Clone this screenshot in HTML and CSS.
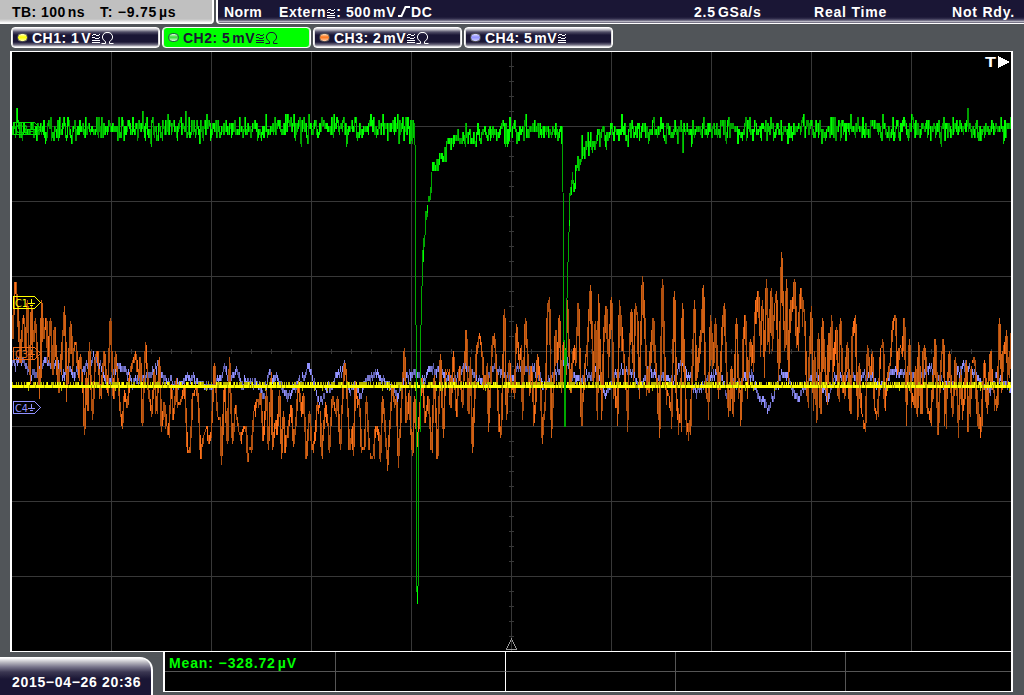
FILE: index.html
```html
<!DOCTYPE html>
<html lang="en">
<head>
<meta charset="utf-8">
<title>Oscilloscope</title>
<link rel="stylesheet" href="styles.css">
</head>
<body>
<svg class="defs" width="0" height="0">
  <symbol id="ac" viewBox="0 0 9 9"><path d="M1 .5h3M7 .5h1M0 1.500h1M4 1.500h3M0 3.500h1M1 3.500h2M3 4.500h4M7 3.500h1M0 6.500h8M0 8.500h8"/></symbol>
  <symbol id="ohm" viewBox="0 0 13 12"><path d="M.5 11.500H4.500V9.500L2.500 8L1.500 6V4L3 1.500L5 .5H8L10 1.500L11.500 4V6L10.500 8L8.500 9.500V11.500H12.500"/></symbol>
</svg>
<div class="scope">
  <header class="top">
    <div class="timebase"><span class="t-tb">TB: 100<i></i>ns</span><span class="t-off">T: −9.75<i></i>µs</span></div>
    <div class="status">
      <span class="t-norm">Norm</span>
      <span class="t-ext">Extern<svg class="ac"><use href="#ac"/></svg>: 500<i></i>mV<svg class="edge" viewBox="0 0 12 11"><path d="M0 10H3.500L7.500 1H12"/></svg>DC</span>
      <span class="t-rate">2.5<i></i>GSa/s</span>
      <span class="t-real">Real Time</span>
      <span class="t-rdy">Not Rdy.</span>
    </div>
  </header>
  <nav class="channels">
    <div class="ch c1"><b class="led"></b><span>CH1: 1<i></i>V</span><svg class="ac"><use href="#ac"/></svg><svg class="ohm"><use href="#ohm"/></svg></div>
    <div class="ch c2"><b class="led"></b><span>CH2: 5<i></i>mV</span><svg class="ac"><use href="#ac"/></svg><svg class="ohm"><use href="#ohm"/></svg></div>
    <div class="ch c3"><b class="led"></b><span>CH3: 2<i></i>mV</span><svg class="ac"><use href="#ac"/></svg><svg class="ohm"><use href="#ohm"/></svg></div>
    <div class="ch c4"><b class="led"></b><span>CH4: 5<i></i>mV</span><svg class="ac"><use href="#ac"/></svg></div>
  </nav>
  <main class="screen"><svg id="plot" viewBox="12 52 999 599" width="999" height="599"></svg></main>
  <footer class="bottom">
    <div class="clock">2015−04−26 20:36</div>
    <div class="measure">
      <div class="cell t-mean"><span>Mean: −328.72<i></i>µV</span></div><div class="cell white"></div><div class="cell"></div><div class="cell"></div><div class="cell last"></div>
      <div class="cell low"></div><div class="cell low white"></div><div class="cell low"></div><div class="cell low"></div><div class="cell low last"></div>
    </div>
  </footer>
</div>
<script src="scope.js"></script>
</body>
</html>
```
FILE: styles.css
```css
* { box-sizing: border-box; }
body { margin: 0; overflow: hidden; background: #515559; color: #fff; font: bold 14px/16px "Liberation Sans", Arial, sans-serif; }
.defs { position: absolute; }
.scope { width: 1024px; height: 695px; display: flex; flex-direction: column; }
i { display: inline-block; width: 2px; }
.top { display: flex; gap: 2px; height: 24px; }
.top span { white-space: pre; flex: none; }
.timebase { width: 214px; height: 24px; display: flex; padding: 4px 0 0 12px; color: #000; background: linear-gradient(#c0c0c0 19px, #ddd 21px, #fff 23px); border-right: 2px solid #fff; border-radius: 0 0 4px 0; }
.status { flex: 1; display: flex; padding: 4px 0 0 6px; border-left: 2px solid #fff; border-bottom: 1px solid #fff; border-radius: 0 0 0 4px; background: linear-gradient(#1a1635 17px, #353150 19px, #8a879a 21px, #e4e4ea 22px, #777487 22.5px, #fff 23px); }
.t-tb { width: 88px; letter-spacing: .45px; }
.t-off { letter-spacing: .75px; }
.t-norm { width: 55px; letter-spacing: .4px; }
.t-ext { width: 415px; letter-spacing: .6px; }
.t-rate { width: 120px; letter-spacing: .8px; }
.t-real { width: 138px; letter-spacing: .8px; }
.t-rdy { letter-spacing: .8px; }
svg { fill: none; stroke: currentColor; }
.ac { width: 9px; height: 9px; margin-top: 1px; shape-rendering: crispEdges; }
.t-ext .ac { margin-left: 1px; vertical-align: -1px; }
.ohm { width: 13px; height: 12px; margin-left: 0; }
.edge { width: 12px; height: 11px; stroke-width: 2; margin: 0 1px 0 2px; }
.channels { display: flex; gap: 2px; height: 27px; padding: 3px 0 0 11px; }
.ch { width: 149px; height: 21px; display: flex; align-items: center; padding: 0 0 0 5px; border: 1px solid #fff; border-radius: 4px; background: linear-gradient(#f4f4f6, #aaa8b4 2px, #514e67 4px, #1a1635 7px, #1a1635 14px, #777487 17px, #fff 19px); box-shadow: inset 1px 0 #ddd, inset -1px 0 #ddd; }
.ch span { white-space: pre; letter-spacing: .5px; margin-right: 1px; }
.c2 { background: #0f0; color: #1a1635; }
.led { width: 11px; height: 9px; border: 1px solid #555; border-radius: 5px; margin-right: 4px; }
.c1 .led { background: linear-gradient(#ffc, #ff0 45%, #ffa); }
.c2 .led { background: linear-gradient(#dfd, #3d3 45%, #dfd); border-color: #254; }
.c3 .led { background: linear-gradient(#fdb, #ff761b 45%, #fca); }
.c4 .led { background: linear-gradient(#ddf, #9191ff 45%, #ccf); }
.screen { margin-left: 10px; width: 1003px; height: 601px; background: #000; border: 1px solid #fff; border-width: 1px 2px; }
#plot { display: block; stroke: none; shape-rendering: crispEdges; }
.marker { font: 11px "DejaVu Sans", sans-serif; }
.bottom { height: 43px; display: flex; gap: 10px; }
.clock { width: 153px; height: 38px; margin-top: 5px; padding: 16px 0 0 12px; letter-spacing: .68px; white-space: pre; border: 2px solid #fff; border-width: 1px 2px 0 0; border-radius: 0 13px 0 0; background: linear-gradient(#fff, #c0bfc6 4px, #77748a 9px, #3b3752 14px, #1a1635 21px); }
.measure { width: 850px; height: 40px; display: grid; grid-template-columns: 171px 170px 170px 170px 1fr; grid-template-rows: 20px 1fr; background: #000; border: 2px solid #fff; border-width: 0 2px 1px; }
.cell { border: 0 solid #555; border-right-width: 1px; border-bottom-width: 1px; }
.cell.low { border-bottom: 0; }
.cell.white { border-right-color: #fff; }
.cell.last { border-right: 0; }
.t-mean { color: #0f0; padding: 3px 0 0 4px; white-space: pre; letter-spacing: .88px; }
```
FILE: scope.js
```js
const svg = document.getElementById('plot');
const NS = 'http://www.w3.org/2000/svg';
const add = (tag, attrs, text) => {
  const el = document.createElementNS(NS, tag);
  for (const k in attrs) el.setAttribute(k, attrs[k]);
  if (text) el.textContent = text;
  svg.appendChild(el);
};
let seed = 20150426;
const rnd = () => { seed = (seed * 1664525 + 1013904223) % 4294967296; return seed / 4294967296; };
const noise = () => rnd() + rnd() + rnd() - 1.5;

// Graticule: 10 x 8 divisions with five ticks per division
let grid = '';
for (let x = 111; x < 1011; x += 100) grid += `M${x} 52h1v599h-1z`;
for (let y = 126; y < 651; y += 75) grid += `M12 ${y}h999v1h-999z`;
for (let x = 31; x < 1011; x += 20) grid += `M${x} 349h1v5h-1z`;
for (let y = 66; y < 651; y += 15) grid += `M509 ${y}h5v1h-5z`;
add('path', { d: grid, fill: '#383838' });

const parse = s => s.trim().split(/\s+/).map(p => p.split(':').map(Number));
const at = (pts, x) => {
  let i = 1;
  while (i < pts.length - 1 && pts[i][0] < x) i++;
  const [a, b] = pts[i - 1], [c, d] = pts[i];
  return b + (d - b) * Math.max(0, Math.min(1, (x - a) / (c - a || 1)));
};
// Column segments in three intensities
const draw = (cols, shades) => {
  const d = ['', '', ''];
  cols.forEach(([x, a, b]) => {
    const h = Math.max(3, Math.round((b - a) / 3) * 3), y = Math.round(a / 3) * 3;
    const k = h > 24 ? (rnd() < .5 ? 0 : 1) : Math.floor(rnd() * 3);
    d[k] += `M${x} ${y}h1v${h}h-1z`;
  });
  d.forEach((p, i) => add('path', { d: p, fill: shades[i] }));
};

const violet = parse(`12:364 17:362 22:360 26:365 31:375 35:376 40:370 45:360 51:365 56:365 60:370 63:375 68:368 73:374 77:372 82:368 87:365 92:358 97:362 102:372 108:385 113:375 118:365 123:366 128:374 132:384 138:378 145:376 150:374 153:370 158:366 162:377 168:381 174:385 180:384 185:378 192:377 197:385 203:385 211:388 217:382 222:374 224:366 227:378 231:378 234:372 237:370 241:385 243:388 245:378 250:383 255:381 259:386 263:395 266:385 269:372 272:380 277:377 280:384 284:392 289:398 293:388 298:383 304:376 309:366 312:376 315:388 319:405 323:397 326:387 331:390 335:378 340:373 344:365 346:378 349:391 355:385 360:395 365:380 370:376 376:374 380:376 385:383 389:385 394:390 397:396 401:387 405:376 411:376 416:372 421:380 426:376 430:370 436:368 442:372 448:378 454:380 460:370 466:366 470:373 477:381 483:380 489:376 495:368 500:372 506:376 512:378 517:368 522:365 528:370 534:368 538:374 542:381 548:380 554:374 560:368 565:352 569:373 575:377 582:378 590:377 595:371 600:380 605:394 610:384 616:374 624:370 632:373 635:380 640:388 646:376 651:370 657:380 663:374 667:381 673:381 678:365 682:358 686:372 691:382 696:391 700:388 705:382 710:377 717:374 722:382 728:402 733:385 740:382 746:374 752:377 757:392 762:400 767:410 772:400 776:388 781:373 787:377 793:390 798:398 803:388 810:376 817:378 822:385 827:400 833:380 840:375 846:379 852:374 857:382 864:374 872:375 878:386 885:384 891:370 897:372 904:372 910:377 918:375 925:372 932:368 940:380 945:385 952:384 958:372 965:365 970:370 977:378 982:384 990:390 997:375 1003:383 1011:388`);
let cols = [];
for (let x = 12; x < 1011; x++) { const y = at(violet, x) + noise() * 4; cols.push([x, y - 3, y + 2 + rnd() * 3]); }
draw(cols, ['#5c5ca8', '#7777cc', '#9191ff']);

const orange = parse(`12:330 13:310 15:280 17:300 20:350 23:315 25:345 27:300 29:377 31:305 33:345 35:320 37:355 40:385 41:298 43:335 46:318 48:350 50:316 52:365 54:325 58:382 62:342 64:308 67:390 70:322 73:355 75:340 78:368 80:355 83:400 84:432 86:370 87:415 89:343 92:417 95:355 97:350 100:397 104:350 107:395 110:316 113:400 115:352 118:385 120:412 122:426 124:390 127:410 129:375 132:360 135:352 138:375 140:355 142:426 145:343 148:390 151:415 154:370 156:415 159:357 161:427 164:400 166:424 168:435 171:385 173:420 176:378 177:405 181:400 184:383 187:447 190:447 192:395 196:385 198:400 200:456 203:438 206:425 208:439 211:430 214:361 217:415 220:415 221:459 224:385 227:444 229:357 232:444 235:405 238:430 240:437 243:425 246:427 247:459 250:448 251:447 253:415 256:400 258:407 260:390 263:437 266:390 268:447 271:373 272:450 275:420 277:430 279:390 281:453 283:412 285:450 289:418 291:403 293:447 296:415 298:380 301:410 303:392 306:459 309:410 312:453 315:430 317:403 320:412 321:459 325:403 328:430 329:450 332:395 335:415 337:394 340:445 344:360 346:375 349:450 352:425 353:453 355:380 357:403 359:400 361:449 364:448 366:397 369:453 373:458 375:425 378:430 380:458 382:397 384:415 387:465 389:430 392:383 394:405 396:395 398:462 401:405 404:349 406:425 409:390 410:425 412:455 414:395 417:445 420:400 422:378 425:422 428:395 431:450 434:375 437:459 440:352 443:435 445:370 449:370 450:410 453:352 456:417 459:365 462:405 466:328 468:414 470:358 472:452 476:350 479:334 482:355 484:390 487:363 488:430 492:340 494:333 497:385 499:435 501:423 504:307 506:417 509:360 511:385 514:395 516:325 519:362 521:347 522:417 525:316 527:350 529:393 531:365 534:423 537:353 540:385 542:438 545:400 547:308 549:298 550:360 551:432 554:370 555:328 557:363 559:313 561:390 563:340 565:380 567:300 570:395 573:345 575:364 578:301 580:375 581:426 584:370 587:343 590:286 593:375 595:320 597:414 598:295 601:400 604:324 606:304 608:360 611:295 613:375 617:414 619:302 621:324 624:365 627:414 629:350 631:307 633:370 635:304 637:315 639:385 642:277 644:313 647:390 650:350 653:317 655:360 657:390 659:421 662:277 665:385 668:395 671:413 674:289 676:400 680:424 682:304 684:360 686:424 690:422 694:302 696:375 699:345 701:325 703:286 705:380 708:406 710:316 713:354 715:318 718:385 720:370 722:322 724:302 726:370 729:406 731:365 733:404 736:317 738:375 741:409 743:332 745:313 747:385 750:340 753:358 755:305 758:290 760:342 762:300 764:363 766:280 768:345 771:286 772:340 774:310 776:292 778:370 779:368 781:253 783:315 785:350 786:278 788:366 790:300 792:307 794:277 797:345 800:288 802:300 804:316 807:402 811:307 813:395 814:350 816:411 818:330 820:408 822:318 825:370 827:393 828:330 830:360 831:316 833:370 836:325 838:392 840:317 843:393 847:343 850:405 852:330 855:315 857:408 859:363 861:413 865:429 867:345 870:375 872:350 874:408 877:417 880:350 883:340 884:411 887:375 890:360 892:325 895:313 897:375 899:345 902:350 904:316 906:407 909:340 911:393 914:400 915:365 917:417 918:340 921:408 923:346 925:350 927:405 930:420 935:337 938:425 940:370 943:336 945:417 949:350 952:413 955:358 958:425 960:370 963:411 966:360 968:420 971:365 974:357 977:400 980:430 984:360 987:403 990:350 992:380 995:405 997:395 999:316 1001:375 1003:350 1006:332 1008:375 1011:331`);
cols = [];
for (let x = 12; x < 1011; x++) {
  const a = at(orange, x - .8), m = at(orange, x), b = at(orange, x + .8);
  const dense = x < 80 || (x > 585 && x < 860) || x > 900 ? 22 : 9;
  cols.push([x, Math.min(a, m, b) + rnd() * 3 - 1, Math.max(a, m, b) + rnd() * dense - 3]);
}
draw(cols, ['#b0500f', '#d06014', '#ff701a']);

// CH1: steady line with a broken row above it
add('path', { d: 'M12 385h999v3h-999z', fill: '#ff0' });
let dim = '', lit = '';
for (let x = 12; x < 1011; x++) {
  const r = rnd();
  if (r < .45) dim += `M${x} 382h1v3h-1z`; else if (r < .6) lit += `M${x} 382h1v3h-1z`;
  if (rnd() < .15) dim += `M${x} 385h1v3h-1z`;
  if (rnd() < .025) dim += `M${x} 388h1v3h-1z`;
}
add('path', { d: dim, fill: '#b4b400' });
add('path', { d: lit, fill: '#ff0' });

// CH2: baseline with two exponential recoveries
const green = parse('12:129 200:128 414:127 432:166 434:164 437:166 440:155 443:150 448:145 455:140 465:137 475:134 500:132 540:129 562:131 573:182 575:172 578:160 583:150 590:142 600:136 620:132 650:130 700:130 760:129 1011:129');
cols = [];
let prev = 128;
for (let x = 12; x < 1011; x++) {
  if ((x > 413 && x < 432) || (x > 561 && x < 573)) continue;
  let y = at(green, x) + noise() * 11;
  if (rnd() < .05) y += rnd() < .5 ? -9 : 8;
  cols.push([x, Math.min(prev, y) - 2, Math.max(prev, y) + 3]);
  prev = y;
  if (x === 413) prev = 165;
  if (x === 561) prev = 182;
}
draw(cols, ['#00a000', '#00cc00', '#00ff00']);
const falls = [[414,123,145],[415,145,325],[416,325,592],[418,432,586],[420,325,432],[421,286,325],[422,250,286],[423,238,262],[424,235,247],[425,211,235],[426,211,220],[427,205,217],[428,196,202],[429,196,202],[430,187,200],[431,172,193],[562,126,192],[563,193,342],[564,340,427],[565,350,427],[566,298,365],[567,262,298],[568,232,262],[569,193,232],[570,187,196],[571,180,193],[572,172,184]];
add('path', { d: falls.map(([x, a, b]) => `M${x} ${a}h1v${b - a}h-1z`).join(''), fill: '#00a800' });
add('path', { d: 'M417 586h1v18h-1zM423 250h1v12h-1zM427 205h1v8h-1zM569 220h1v6h-1zM571 187h1v8h-1z', fill: '#0f0' });

// Channel ground markers
[['C1', 302, '#ff0'], ['C2', 128, '#00e000'], ['C3', 353, '#f06a18'], ['C4', 407, '#9191ff']].forEach(([name, y, c]) => {
  add('path', { d: `M13.500 ${y - 5.5}h21l6 6l-6 6h-21z`, fill: 'none', stroke: c });
  add('path', { d: `M31.500 ${y - 3}v5M28 ${y + 1.5}h7M30 ${y + 3.5}h3`, fill: 'none', stroke: c });
  add('text', { x: 15, y: y + 4.5, class: 'marker', fill: c, textLength: 13, lengthAdjust: 'spacingAndGlyphs' }, name);
});
add('path', { d: 'M511.500 639l-5 10h10z', fill: 'none', stroke: '#999' });
add('path', { d: 'M998 56v12l12-6z', fill: '#fff' });
add('text', { x: 985, y: 67, fill: '#fff', 'font-size': 15, textLength: 11, lengthAdjust: 'spacingAndGlyphs' }, 'T');
```
